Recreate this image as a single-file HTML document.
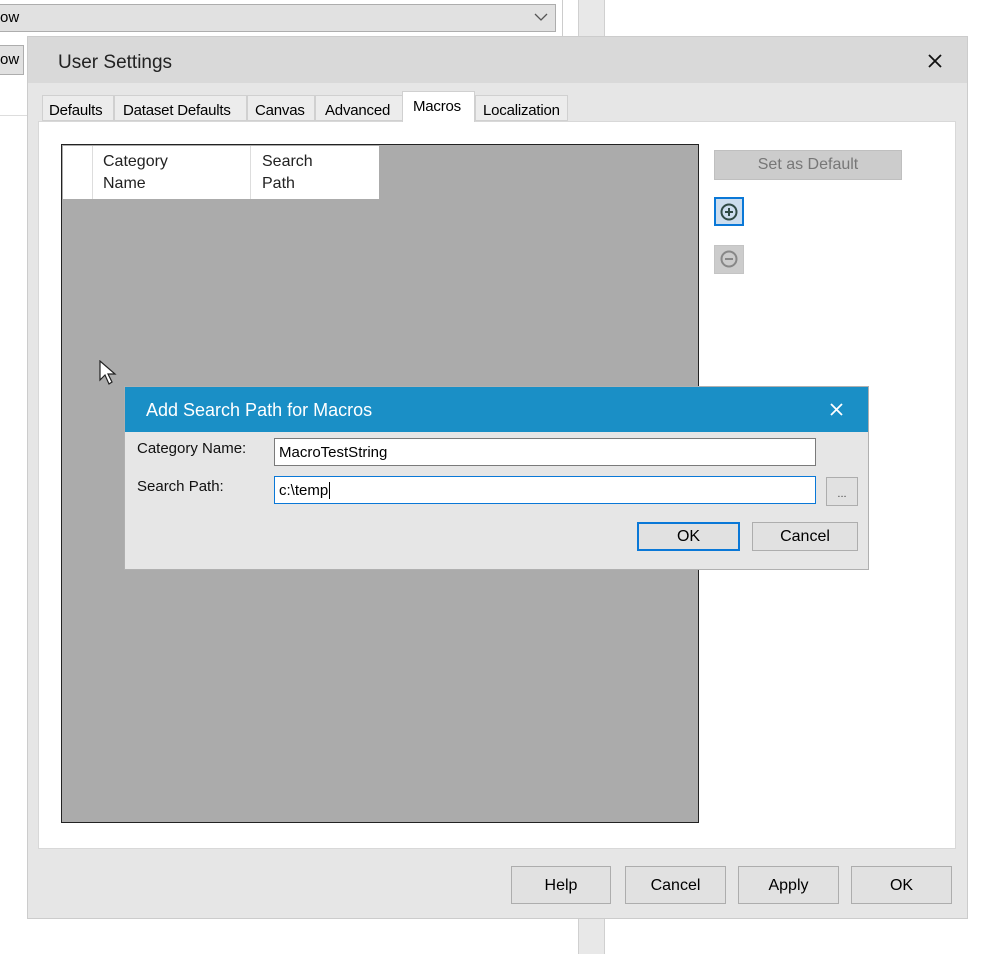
<!DOCTYPE html>
<html><head><meta charset="utf-8"><style>
*{box-sizing:border-box;margin:0;padding:0}
body{width:999px;height:954px;background:#fff;position:relative;overflow:hidden;font-family:"Liberation Sans",sans-serif;font-size:15px;color:#000}
.a{position:absolute}
.btn{position:absolute;background:#e1e1e1;border:1px solid #adadad;text-align:center;font-size:16px}
.tab{position:absolute;top:95px;height:26px;border:1px solid #d0d0d0;background:#ececec;padding:6px 0 0 7px;font-size:15px;letter-spacing:-0.2px}
</style></head><body>
<div class="a" style="left:0;top:4px;width:556px;height:28px;background:#e1e1e1;border:1px solid #adadad;border-left:none"></div>
<div class="a" style="left:0;top:9px;font-size:15px">ow</div>
<svg class="a" style="left:534px;top:12px" width="14" height="10"><path d="M1 2 L7 8 L13 2" stroke="#555" fill="none" stroke-width="1.3"/></svg>
<div class="a" style="left:0;top:45px;width:24px;height:30px;background:#e1e1e1;border:1px solid #adadad;border-left:none"></div>
<div class="a" style="left:0;top:51px">ow</div>
<div class="a" style="left:0;top:115px;width:27px;height:1px;background:#ddd"></div>
<div class="a" style="left:562px;top:0;width:1px;height:36px;background:#ccc"></div>
<div class="a" style="left:578px;top:0;width:27px;height:954px;background:#e8e8e8;border-left:1px solid #d0d0d0;border-right:1px solid #d0d0d0"></div>

<div class="a" style="left:27px;top:36px;width:941px;height:883px;background:#e6e6e6;border:1px solid #ccc"></div>
<div class="a" style="left:28px;top:37px;width:939px;height:46px;background:#d9d9d9"></div>
<div class="a" style="left:58px;top:52px;font-size:19px;color:#222">User Settings</div>
<svg class="a" style="left:928px;top:54px" width="14" height="14"><path d="M1 1L13 13M13 1L1 13" stroke="#111" stroke-width="1.8"/></svg>

<div class="tab" style="left:42px;width:72px;padding-left:6px">Defaults</div>
<div class="tab" style="left:114px;width:133px;padding-left:8px">Dataset Defaults</div>
<div class="tab" style="left:247px;width:68px">Canvas</div>
<div class="tab" style="left:315px;width:88px;padding-left:9px">Advanced</div>
<div class="a" style="left:402px;top:91px;width:73px;height:31px;border:1px solid #d0d0d0;border-bottom:none;background:#fff;padding:6px 0 0 10px;z-index:2;letter-spacing:-0.2px">Macros</div>
<div class="tab" style="left:475px;width:93px">Localization</div>
<div class="a" style="left:38px;top:121px;width:918px;height:728px;background:#fff;border:1px solid #d8d8d8"></div>

<div class="a" style="left:61px;top:144px;width:638px;height:679px;background:#ababab;border:1px solid #222"></div>
<div class="a" style="left:63px;top:146px;width:316px;height:53px;background:#fff"></div>
<div class="a" style="left:92px;top:146px;width:1px;height:53px;background:#ddd"></div>
<div class="a" style="left:250px;top:146px;width:1px;height:53px;background:#ddd"></div>
<div class="a" style="left:103px;top:151px;line-height:22px;font-size:16px;color:#222">Category<br>Name</div>
<div class="a" style="left:262px;top:151px;line-height:22px;font-size:16px;color:#222">Search<br>Path</div>

<div class="a" style="left:714px;top:150px;width:188px;height:30px;background:#cccccc;border:1px solid #bfbfbf;text-align:center;padding-top:5px;color:#777;font-size:16px">Set as Default</div>
<div class="a" style="left:714px;top:197px;width:30px;height:29px;background:#cde;border:2px solid #0a78d7"></div>
<svg class="a" style="left:719px;top:202px" width="20" height="20"><circle cx="10" cy="10" r="7.5" stroke="#2f4a45" stroke-width="2" fill="none"/><path d="M10 6v8M6 10h8" stroke="#2f4a45" stroke-width="2"/></svg>
<div class="a" style="left:714px;top:245px;width:30px;height:29px;background:#ccc;border:1px solid #c4c4c4"></div>
<svg class="a" style="left:719px;top:249px" width="20" height="20"><circle cx="10" cy="10" r="7.5" stroke="#888" stroke-width="2" fill="none"/><path d="M6 10h8" stroke="#888" stroke-width="2"/></svg>

<svg class="a" style="left:99px;top:360px" width="20" height="28"><path d="M1 1 L1 20 L6 15 L10 24 L13 22 L9 14 L16 14 Z" fill="#fff" stroke="#222" stroke-width="1.2"/></svg>

<div class="btn" style="left:511px;top:866px;width:100px;height:38px;padding-top:10px">Help</div>
<div class="btn" style="left:625px;top:866px;width:101px;height:38px;padding-top:10px">Cancel</div>
<div class="btn" style="left:738px;top:866px;width:101px;height:38px;padding-top:10px">Apply</div>
<div class="btn" style="left:851px;top:866px;width:101px;height:38px;padding-top:10px">OK</div>

<div class="a" style="left:124px;top:386px;width:745px;height:184px;background:#e6e6e6;border:1px solid #b0b0b0"></div>
<div class="a" style="left:125px;top:387px;width:743px;height:45px;background:#1a8fc6"></div>
<div class="a" style="left:146px;top:400px;font-size:18px;color:#fff">Add Search Path for Macros</div>
<svg class="a" style="left:830px;top:403px" width="13" height="13"><path d="M1 1L12 12M12 1L1 12" stroke="#fff" stroke-width="1.8"/></svg>
<div class="a" style="left:137px;top:440px;font-size:15px;color:#111">Category Name:</div>
<div class="a" style="left:137px;top:478px;font-size:15px;color:#111">Search Path:</div>
<div class="a" style="left:274px;top:438px;width:542px;height:28px;background:#fff;border:1px solid #7a7a7a;padding:5px 0 0 4px;font-size:15px">MacroTestString</div>
<div class="a" style="left:274px;top:476px;width:542px;height:28px;background:#fff;border:1px solid #0a78d7;padding:5px 0 0 4px;font-size:15px">c:\temp<span style="border-left:1px solid #000;margin-left:1px"></span></div>
<div class="a" style="left:826px;top:477px;width:32px;height:29px;background:#e1e1e1;border:1px solid #adadad;text-align:center;font-size:11px;padding-top:10px;color:#444">...</div>
<div class="btn" style="left:637px;top:522px;width:103px;height:29px;border:2px solid #0a78d7;padding-top:4px">OK</div>
<div class="btn" style="left:752px;top:522px;width:106px;height:29px;padding-top:5px">Cancel</div>
</body></html>
